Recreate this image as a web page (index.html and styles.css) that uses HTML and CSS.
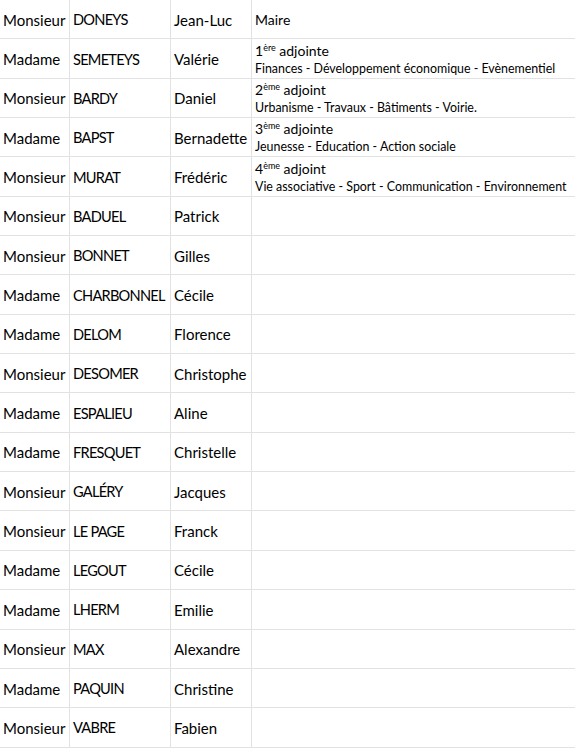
FILE: index.html
```html
<!DOCTYPE html>
<html lang="fr">
<head>
<meta charset="utf-8">
<title>Conseil municipal</title>
<link rel="stylesheet" href="styles.css">
</head>
<body>
<div class="sheet">
  <div class="c">Monsieur</div><div class="c nom">DONEYS</div><div class="c">Jean-Luc</div><div class="c role"><span class="r1">Maire</span></div>
  <div class="c">Madame</div><div class="c nom">SEMETEYS</div><div class="c">Valérie</div><div class="c role"><span class="r1">1<sup>ère</sup> adjointe</span><span class="r2">Finances - Développement économique - Evènementiel</span></div>
  <div class="c">Monsieur</div><div class="c nom">BARDY</div><div class="c">Daniel</div><div class="c role"><span class="r1">2<sup>ème</sup> adjoint</span><span class="r2">Urbanisme - Travaux - Bâtiments - Voirie.</span></div>
  <div class="c">Madame</div><div class="c nom">BAPST</div><div class="c">Bernadette</div><div class="c role"><span class="r1">3<sup>ème</sup> adjointe</span><span class="r2">Jeunesse - Education - Action sociale</span></div>
  <div class="c">Monsieur</div><div class="c nom">MURAT</div><div class="c">Frédéric</div><div class="c role"><span class="r1">4<sup>ème</sup> adjoint</span><span class="r2">Vie associative - Sport - Communication - Environnement</span></div>
  <div class="c">Monsieur</div><div class="c nom">BADUEL</div><div class="c">Patrick</div><div class="c role"></div>
  <div class="c">Monsieur</div><div class="c nom">BONNET</div><div class="c">Gilles</div><div class="c role"></div>
  <div class="c">Madame</div><div class="c nom">CHARBONNEL</div><div class="c">Cécile</div><div class="c role"></div>
  <div class="c">Madame</div><div class="c nom">DELOM</div><div class="c">Florence</div><div class="c role"></div>
  <div class="c">Monsieur</div><div class="c nom">DESOMER</div><div class="c">Christophe</div><div class="c role"></div>
  <div class="c">Madame</div><div class="c nom">ESPALIEU</div><div class="c">Aline</div><div class="c role"></div>
  <div class="c">Madame</div><div class="c nom">FRESQUET</div><div class="c">Christelle</div><div class="c role"></div>
  <div class="c">Monsieur</div><div class="c nom">GALÉRY</div><div class="c">Jacques</div><div class="c role"></div>
  <div class="c">Monsieur</div><div class="c nom">LE PAGE</div><div class="c">Franck</div><div class="c role"></div>
  <div class="c">Madame</div><div class="c nom">LEGOUT</div><div class="c">Cécile</div><div class="c role"></div>
  <div class="c">Madame</div><div class="c nom">LHERM</div><div class="c">Emilie</div><div class="c role"></div>
  <div class="c">Monsieur</div><div class="c nom">MAX</div><div class="c">Alexandre</div><div class="c role"></div>
  <div class="c">Madame</div><div class="c nom">PAQUIN</div><div class="c">Christine</div><div class="c role"></div>
  <div class="c">Monsieur</div><div class="c nom">VABRE</div><div class="c">Fabien</div><div class="c role"></div>
</div>
</body>
</html>
```
FILE: styles.css
```css
html, body {
  margin: 0;
  padding: 0;
  background: #fff;
}
.sheet {
  display: grid;
  grid-template-columns: 70px 101px 81px 1fr;
  grid-auto-rows: 39.35px;
  width: 575px;
  font-family: Lato, "Open Sans", sans-serif;
  color: #000;
}
.c {
  box-sizing: border-box;
  border-right: 1px solid #e2e2e2;
  border-bottom: 1px solid #e2e2e2;
  padding: 1px 0 0 3px;
  display: flex;
  align-items: center;
  font-size: 15px;
  white-space: nowrap;
  overflow: hidden;
}
.nom {
  font-size: 14.6px;
  letter-spacing: -0.75px;
}
.role {
  border-right: none;
  flex-direction: column;
  align-items: flex-start;
  justify-content: center;
  padding: 2px 0 0 3px;
}
.r1 {
  font-size: 14px;
  line-height: 18px;
}
.r2 {
  font-size: 12.4px;
  line-height: 18px;
}
sup {
  font-size: 9px;
  line-height: 0;
  vertical-align: 5px;
}
```
